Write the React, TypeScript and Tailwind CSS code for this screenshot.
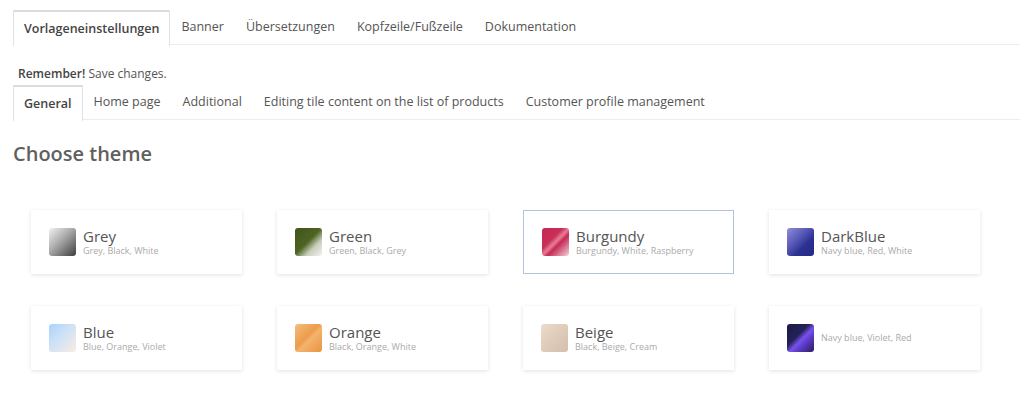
import React from "react";

const topTabs = ["Vorlageneinstellungen", "Banner", "Übersetzungen", "Kopfzeile/Fußzeile", "Dokumentation"];
const subTabs = ["General", "Home page", "Additional", "Editing tile content on the list of products", "Customer profile management"];

const themes = [
  { name: "Grey", colors: "Grey, Black, White", swatch: "bg-[linear-gradient(135deg,#f2f2f2_0%,#a9a9a9_45%,#3d3d3d_100%)]" },
  { name: "Green", colors: "Green, Black, Grey", swatch: "bg-[linear-gradient(135deg,#3f5418_0%,#4d6422_48%,#c9cdbd_70%,#f4f4f2_100%)]" },
  { name: "Burgundy", colors: "Burgundy, White, Raspberry", swatch: "bg-[linear-gradient(135deg,#c12a52_0%,#c92e58_38%,#e77d98_50%,#c52a55_60%,#f6d3dd_100%)]" },
  { name: "DarkBlue", colors: "Navy blue, Red, White", swatch: "bg-[linear-gradient(135deg,#8f8fd8_0%,#5557b4_40%,#2b3191_65%,#242a86_100%)]" },
  { name: "Blue", colors: "Blue, Orange, Violet", swatch: "bg-[linear-gradient(135deg,#a9d3fb_0%,#cfe2f6_45%,#f8ede3_100%)]" },
  { name: "Orange", colors: "Black, Orange, White", swatch: "bg-[linear-gradient(135deg,#f2c07e_0%,#ec9c4c_45%,#f3b36d_55%,#e89442_100%)]" },
  { name: "Beige", colors: "Black, Beige, Cream", swatch: "bg-[linear-gradient(135deg,#ecdccd_0%,#dfcbb9_50%,#d3bfad_100%)]" },
  { name: "", colors: "Navy blue, Violet, Red", swatch: "bg-[linear-gradient(135deg,#1c1a44_0%,#24215a_40%,#7652ec_55%,#5a38c0_70%,#2a1f60_100%)]" },
];

function Tabs({ items }: { items: string[] }) {
  return (
    <div className="flex border-b border-[#ececec] h-[35px]">
      {items.map((t, i) => (
        <div
          key={t}
          className={
            i === 0
              ? "px-[10px] h-[36px] flex items-center bg-white border border-[#e2e2e2] border-t-2 border-t-[#dcdcdc] border-b-0 text-[#444] font-semibold"
              : "px-[10px] h-[35px] flex items-center border border-transparent text-[#555]"
          }
        >
          {t}
        </div>
      ))}
    </div>
  );
}

export default function App() {
  return (
    <div className="bg-white font-['Open_Sans',sans-serif] text-[12.5px] text-[#555] pl-[13px] pr-[4px] pt-[10px] h-[398px] overflow-hidden">
      <Tabs items={topTabs} />

      <p className="mt-[20px] pl-[5px] text-[12px] leading-[17px] text-[#555]">
        <span className="font-semibold text-[#444]">Remember!</span> Save changes.
      </p>

      <div className="mt-[3px]">
        <Tabs items={subTabs} />
      </div>

      <h2 className="mt-[20px] text-[20px] leading-[28px] font-semibold text-[#5f5f5f]">Choose theme</h2>

      <div className="mt-[42px] grid grid-cols-[repeat(4,246px)] gap-y-[32px]">
        {themes.map((t, i) => (
          <div key={i} className="px-[18px]">
            <div
              className={
                "h-[64px] w-[211px] bg-white flex items-center gap-[7px] pl-[18px] " +
                (i === 2
                  ? "border border-[#b5c2dc]"
                  : "shadow-[0_1px_4px_rgba(0,0,0,0.12)]")
              }
            >
              <div className={"w-[27px] h-[28px] rounded-[3px] shrink-0 " + t.swatch} />
              <div className="flex flex-col">
                {t.name && <span className="text-[15px] leading-[18px] text-[#555]">{t.name}</span>}
                <span className="text-[9px] leading-[12px] text-[#aaa]">{t.colors}</span>
              </div>
            </div>
          </div>
        ))}
      </div>
    </div>
  );
}
